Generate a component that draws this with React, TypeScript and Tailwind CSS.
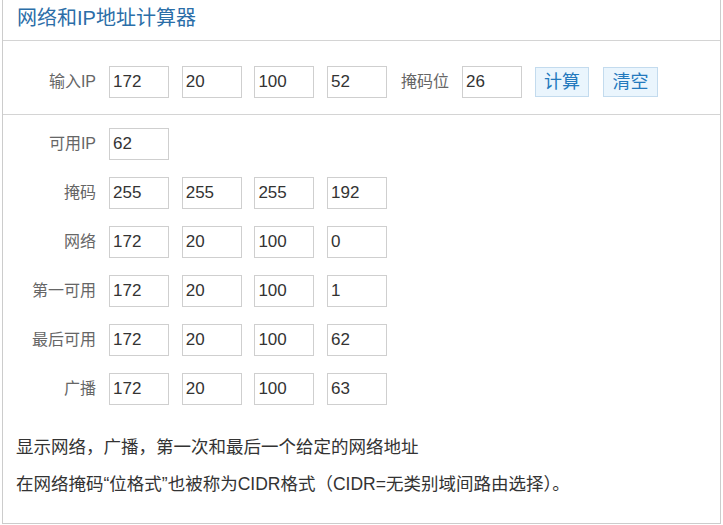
import React from 'react';

const FONT = '"Liberation Sans", "Noto Sans CJK SC", sans-serif';

interface FieldProps {
  value: string;
}

function Field({ value }: FieldProps) {
  return (
    <input
      readOnly
      value={value}
      className="w-[60px] h-[32px] border border-[#cfcfcf] px-[3px] text-[17px] text-[#333] outline-none bg-white"
      style={{ fontFamily: FONT }}
    />
  );
}

interface RowProps {
  label: string;
  values: string[];
}

function Row({ label, values }: RowProps) {
  return (
    <div className="flex items-center">
      <div className="w-[93px] text-right text-[16px] text-[#666]">{label}</div>
      <div className="flex gap-[12.7px] ml-[13px]">
        {values.map((v, i) => (
          <Field key={i} value={v} />
        ))}
      </div>
    </div>
  );
}

const results: RowProps[] = [
  { label: '掩码', values: ['255', '255', '255', '192'] },
  { label: '网络', values: ['172', '20', '100', '0'] },
  { label: '第一可用', values: ['172', '20', '100', '1'] },
  { label: '最后可用', values: ['172', '20', '100', '62'] },
  { label: '广播', values: ['172', '20', '100', '63'] },
];

export default function App() {
  return (
    <div className="pl-[2px] bg-white" style={{ fontFamily: FONT }}>
      <div className="w-[719px] border-x border-b border-[#cccccc]">
        <div className="h-[41px] border-b border-[#d4d4d4] flex items-center pl-[14px] pb-[5px]">
          <h1 className="text-[20px] text-[#2b6ea8] leading-none">网络和IP地址计算器</h1>
        </div>

        <div className="pt-[25px] pb-[16px] border-b border-[#d4d4d4] flex items-center">
          <Row label="输入IP" values={['172', '20', '100', '52']} />
          <div className="ml-[14px] text-[16px] text-[#666]">掩码位</div>
          <div className="ml-[13px]">
            <Field value="26" />
          </div>
          <button className="ml-[13px] w-[54px] h-[30px] border border-[#c3dbee] bg-[#eaf5fd] text-[18px] text-[#2379bd] leading-none">
            计算
          </button>
          <button className="ml-[14px] w-[55px] h-[30px] border border-[#c3dbee] bg-[#eaf5fd] text-[18px] text-[#2379bd] leading-none">
            清空
          </button>
        </div>

        <div className="pt-[13px] pb-[20px]">
          <div className="flex flex-col gap-[17px]">
            <Row label="可用IP" values={['62']} />
            {results.map((r) => (
              <Row key={r.label} label={r.label} values={r.values} />
            ))}
          </div>
          <div className="mt-[24px] pl-[13px] text-[17.5px] text-[#333] leading-[37px]">
            <p>显示网络，广播，第一次和最后一个给定的网络地址</p>
            <p>在网络掩码“位格式”也被称为CIDR格式（CIDR=无类别域间路由选择）。</p>
          </div>
        </div>
      </div>
    </div>
  );
}
